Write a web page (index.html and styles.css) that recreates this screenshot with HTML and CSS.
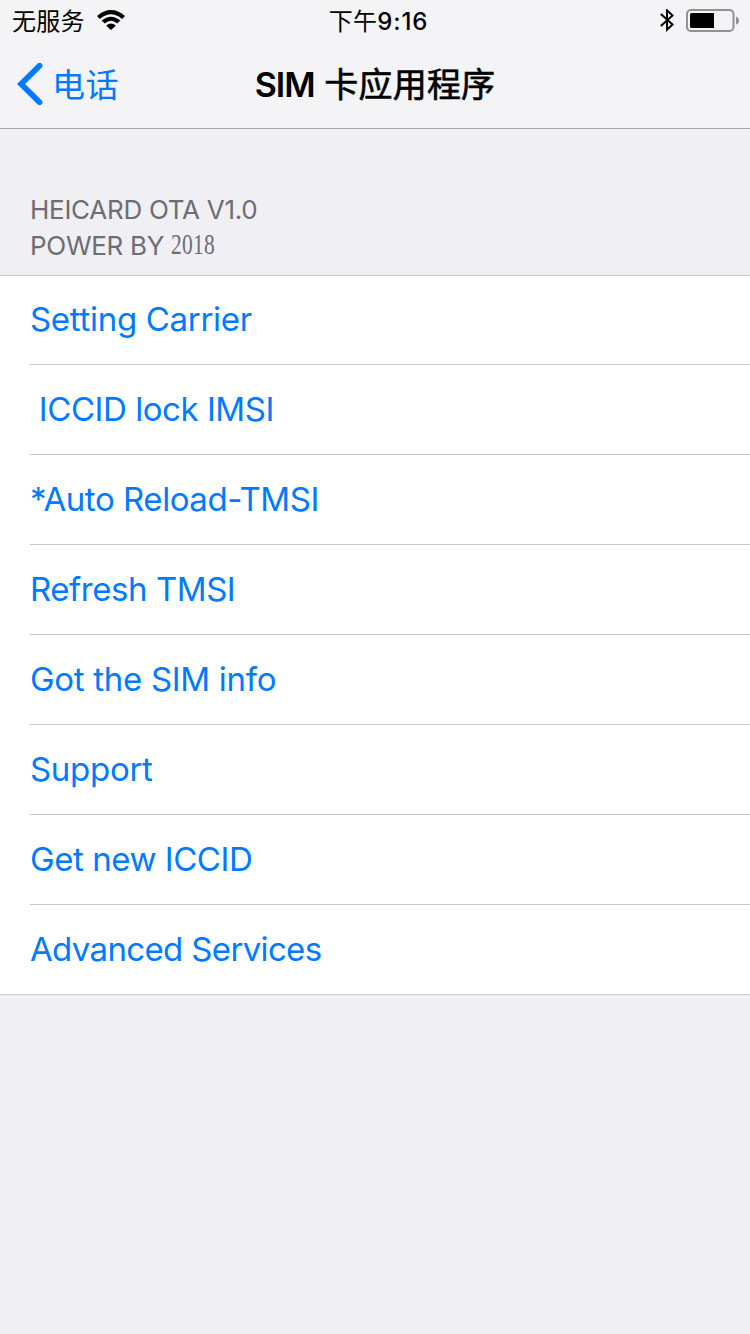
FILE: index.html
```html
<!DOCTYPE html>
<html lang="zh-CN">
<head>
  <meta charset="UTF-8" />
  <meta name="viewport" content="width=device-width, initial-scale=1.0"/>
  <title>SIM 卡应用程序</title>
  <link rel="stylesheet" href="styles.css">
</head>
<body>

  <header>
    <div class="status-bar">
      <div class="status-left">
        <span class="carrier">无服务</span>
        <svg class="wifi" width="28" height="20" viewBox="0 0 28 20">
          <path d="M0 5.9Q14-5.9 28 5.9L25 8.9Q14-.4 3 8.9Z"/>
          <path d="M4.7 10.6Q14 2.8 23.3 10.6L20.3 13.4Q14 8.2 7.7 13.4Z"/>
          <path d="M9.4 15.3Q14 11.9 18.6 15.3Q18 17 14 20Q10 17 9.4 15.3Z"/>
        </svg>
      </div>
      <span class="time">下午<b>9:16</b></span>
      <div class="status-right">
        <svg class="bluetooth" width="14" height="24" viewBox="0 0 14 24">
          <path d="M.8 5L12.6 15.5L7 20.7V1.3L12.6 6.5L.8 17"/>
        </svg>
        <svg class="battery" width="53" height="24" viewBox="0 0 53 24">
          <rect class="case" x="1" y="1" width="46.5" height="21" rx="4"/>
          <path d="M5.5 4H28V19H5.5Q4 19 4 17.5V5.5Q4 4 5.5 4Z"/>
          <path class="cap" d="M50 7.5Q53 8.5 53 11.5T50 15.5Z"/>
        </svg>
      </div>
    </div>

    <nav class="nav-bar">
      <a class="back" href="#">
        <svg width="26" height="42" viewBox="0 0 26 42">
          <path d="M22.5 2.7L4 21L22.5 39.3"/>
        </svg>
        <span>电话</span>
      </a>
      <h1><span>SIM</span> 卡应用程序</h1>
    </nav>
  </header>

  <div class="section-header">
    <p>HEICARD OTA V1.0</p>
    <p>POWER BY <span class="year">2018</span></p>
  </div>

  <ul class="menu">
    <li><a href="#">Setting Carrier</a></li>
    <li><a class="snug" href="#">&nbsp;ICCID lock IMSI</a></li>
    <li><a class="snug" href="#">*Auto Reload-TMSI</a></li>
    <li><a class="snug" href="#">Refresh TMSI</a></li>
    <li><a href="#">Got the SIM info</a></li>
    <li><a href="#">Support</a></li>
    <li><a class="snug" href="#">Get new ICCID</a></li>
    <li><a class="tight" href="#">Advanced Services</a></li>
  </ul>

</body>
</html>
```
FILE: styles.css
```css
:root {
  --main-bg: #efeff4;
  --bar-bg: #f4f4f6;
  --tint: #007aff;
  --line: #c8c7cc;
  --muted: #6d6d72;
}

* {
  box-sizing: border-box;
}

body {
  font-family: Inter, 'Noto Sans CJK SC', sans-serif;
  margin: 0;
  background: var(--main-bg);
  color: #000;
}

a {
  color: var(--tint);
  text-decoration: none;
}

header {
  height: 129px;
  background: var(--bar-bg);
  border-bottom: 1px solid #a9a9ad;
}

.status-bar {
  display: grid;
  grid-template-columns: 1fr auto 1fr;
  align-items: center;
  height: 40px;
  padding: 0 11px 0 12px;
  font-size: 24px;
  line-height: 36px;
}

.status-left,
.status-right {
  display: flex;
  align-items: center;
}

.status-left {
  gap: 12px;
}

.status-right {
  justify-content: flex-end;
  gap: 12px;
  padding-top: 2px;
}

.carrier,
.time {
  padding-top: 3px;
  letter-spacing: 0.3px;
}

.time {
  padding-left: 6px;
}

.time b {
  font-weight: 550;
  letter-spacing: 0.9px;
}

.bluetooth path {
  fill: none;
  stroke: #000;
  stroke-width: 2;
}

.battery .case {
  fill: none;
  stroke: #929294;
  stroke-width: 2;
}

.battery .cap {
  fill: #929294;
}

.nav-bar {
  display: grid;
  grid-template-columns: 1fr auto 1fr;
  align-items: center;
  height: 88px;
  padding: 0 17px;
}

.back {
  display: flex;
  align-items: center;
  gap: 9px;
  font-size: 33px;
}

.back span {
  padding-bottom: 2px;
  letter-spacing: 0.5px;
}

.back path {
  fill: none;
  stroke: var(--tint);
  stroke-width: 5.8;
  stroke-linecap: round;
}

/* medium weight for the Chinese part, semibold for the Latin part */
h1 {
  margin: 0;
  padding-bottom: 4px;
  font-size: 34px;
  font-weight: 400;
  letter-spacing: 0.2px;
  -webkit-text-stroke: 0.6px #000;
}

h1 span {
  font-weight: 600;
  letter-spacing: -1px;
  -webkit-text-stroke: 0;
}

.section-header {
  height: 147px;
  padding: 63px 30px 0;
  border-bottom: 1px solid var(--line);
  color: var(--muted);
  font-size: 26px;
  line-height: 36px;
  letter-spacing: -0.28px;
}

.section-header p {
  height: 36px;
  margin: 0;
}

.year {
  display: inline-block;
  font-family: 'Liberation Serif', serif;
  font-size: 29px;
  line-height: 30px;
  letter-spacing: 0.4px;
  transform: translateY(-1px) scaleX(0.74);
  transform-origin: left;
}

.menu {
  margin: 0;
  padding: 0 0 0 30px;
  list-style: none;
  background: #fff;
  border-bottom: 1px solid var(--line);
}

.menu li {
  height: 90px;
  border-bottom: 1px solid var(--line);
  font-size: 33px;
  line-height: 89px;
  letter-spacing: -0.3px;
}

.menu li:first-child {
  height: 89px;
  line-height: 87px;
}

.menu li:last-child {
  height: 89px;
  border-bottom: none;
}

.menu .snug {
  letter-spacing: -0.45px;
}

.menu .tight {
  letter-spacing: -0.65px;
}
```
